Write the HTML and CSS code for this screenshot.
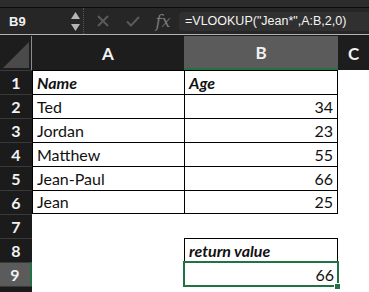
FILE: index.html
```html
<!DOCTYPE html>
<html lang="en">
<head>
    <meta charset="UTF-8">
    <meta name="viewport" content="width=device-width, initial-scale=1.0">
    <title>VLOOKUP wildcard</title>
    <link rel="stylesheet" href="styles.css">
</head>
<body>
    <div class="top-strip"></div>

    <!-- formula bar -->
    <div class="formula-bar">
        <div class="name-box">B9</div>
        <div class="spin">
            <svg width="9" height="7" viewBox="0 0 9 7"><path d="M4.5 0 L9 7 L0 7 Z" fill="#b5b5b5"/></svg>
            <svg width="9" height="7" viewBox="0 0 9 7"><path d="M0 0 L9 0 L4.5 7 Z" fill="#b5b5b5"/></svg>
        </div>
        <div class="sep"></div>
        <div class="fb-icon">
            <svg width="12" height="12" viewBox="0 0 12 12"><path d="M1 1 L11 11 M11 1 L1 11" stroke="#5a5a5a" stroke-width="2"/></svg>
        </div>
        <div class="fb-icon">
            <svg width="14" height="11" viewBox="0 0 14 11"><path d="M1 5.5 L5 9.5 L13 1" stroke="#5a5a5a" stroke-width="2" fill="none"/></svg>
        </div>
        <div class="fb-icon fx">fx</div>
        <div class="formula">=VLOOKUP("Jean*",A:B,2,0)</div>
    </div>

    <!-- sheet -->
    <div class="sheet">
        <div class="corner"><div class="corner-tri"></div></div>
        <div class="col-head">A</div>
        <div class="col-head active">B</div>
        <div class="col-head">C</div>

        <div class="row-head">1</div>
        <div class="cell bx hd">Name</div>
        <div class="cell bx br hd">Age</div>
        <div class="cell"></div>

        <div class="row-head">2</div>
        <div class="cell bx">Ted</div>
        <div class="cell bx br num">34</div>
        <div class="cell"></div>

        <div class="row-head">3</div>
        <div class="cell bx">Jordan</div>
        <div class="cell bx br num">23</div>
        <div class="cell"></div>

        <div class="row-head">4</div>
        <div class="cell bx">Matthew</div>
        <div class="cell bx br num">55</div>
        <div class="cell"></div>

        <div class="row-head">5</div>
        <div class="cell bx">Jean-Paul</div>
        <div class="cell bx br num">66</div>
        <div class="cell"></div>

        <div class="row-head">6</div>
        <div class="cell bx bb">Jean</div>
        <div class="cell bx br bb num">25</div>
        <div class="cell"></div>

        <div class="row-head">7</div>
        <div class="cell"></div>
        <div class="cell"></div>
        <div class="cell"></div>

        <div class="row-head">8</div>
        <div class="cell"></div>
        <div class="cell bx br hd">return value</div>
        <div class="cell"></div>

        <div class="row-head active">9</div>
        <div class="cell"></div>
        <div class="cell selected num">66<span class="fill-handle"></span></div>
        <div class="cell"></div>

        <div class="row-head"></div>
        <div class="cell"></div>
        <div class="cell"></div>
        <div class="cell"></div>
    </div>
</body>
</html>
```

FILE: styles.css
```css
body {
    margin: 0;
    background-color: #1d1d1d;
    font-family: Lato, "Open Sans", sans-serif;
    height: 292px;
    overflow: hidden;
}

.top-strip {
    height: 7px;
    background-color: #2c2c2c;
    border-bottom: 1px solid #0c0c0c;
}

/* formula bar */
.formula-bar {
    display: flex;
    align-items: center;
    height: 26px;
    background-color: #262626;
    border-bottom: 1px solid #b4b4b4;
}

.name-box {
    width: 59px;
    padding-left: 9px;
    color: #f2f2f2;
    font-family: "Liberation Sans", Arial, sans-serif;
    font-size: 13px;
    font-weight: bold;
}

.spin {
    width: 15px;
    display: flex;
    flex-direction: column;
    align-items: center;
    gap: 5px;
}

.spin svg {
    display: block;
}

.sep {
    align-self: stretch;
    border-left: 1px dotted #555;
    margin-right: 4px;
}

.fb-icon {
    width: 30px;
    display: flex;
    justify-content: center;
    align-items: center;
}

.fb-icon svg {
    display: block;
}

.fx {
    color: #7a7a7a;
    font-family: "DejaVu Serif", "Liberation Serif", serif;
    font-style: italic;
    font-size: 16px;
}

.formula {
    flex: 1;
    margin-left: 1px;
    height: 19px;
    line-height: 19px;
    padding-left: 6px;
    background-color: #303030;
    border-radius: 4px 0 0 4px;
    color: #f4f4f4;
    font-family: "Liberation Sans", Arial, sans-serif;
    font-size: 12.5px;
    white-space: nowrap;
}

/* sheet */
.sheet {
    display: grid;
    grid-template-columns: 32px 152px 154px 1fr;
    grid-template-rows: 34px;
    grid-auto-rows: 24px;
    border-top: 1px solid #1a1a1a;
}

.corner {
    position: relative;
    background-color: #1d1d1d;
    border-right: 1px solid #8c8c8c;
}

.corner-tri {
    position: absolute;
    right: 2px;
    bottom: 2px;
    width: 0;
    height: 0;
    border-style: solid;
    border-width: 0 0 26px 26px;
    border-color: transparent transparent #4a4a4a transparent;
}

.col-head {
    display: flex;
    justify-content: center;
    align-items: center;
    background-color: #1d1d1d;
    color: #f2f2f2;
    font-size: 17px;
    font-weight: bold;
}

.col-head.active {
    background-color: #5b5b5b;
    border-bottom: 2px solid #217346;
}

.row-head {
    box-sizing: border-box;
    display: flex;
    justify-content: center;
    align-items: center;
    background-color: #1b1b1b;
    border-top: 1px solid #3a3a3a;
    color: #f2f2f2;
    font-size: 16px;
    font-weight: bold;
}

.row-head.active {
    background-color: #5b5b5b;
    border-right: 2px solid #217346;
}

.cell {
    box-sizing: border-box;
    display: flex;
    align-items: flex-end;
    padding: 0 4px 2px 4px;
    background-color: #fff;
    color: #111;
    font-size: 16px;
    white-space: nowrap;
}

.bx {
    border-top: 1px solid #000;
    border-left: 1px solid #000;
}

.br {
    border-right: 1px solid #000;
}

.bb {
    border-bottom: 1px solid #000;
}

.hd {
    font-weight: bold;
    font-style: italic;
}

.num {
    justify-content: flex-end;
}

.selected {
    position: relative;
    outline: 2px solid #217346;
    outline-offset: -1px;
}

.fill-handle {
    position: absolute;
    right: -3px;
    bottom: -4px;
    width: 5px;
    height: 5px;
    background-color: #217346;
    border: 1px solid #fff;
}
```
